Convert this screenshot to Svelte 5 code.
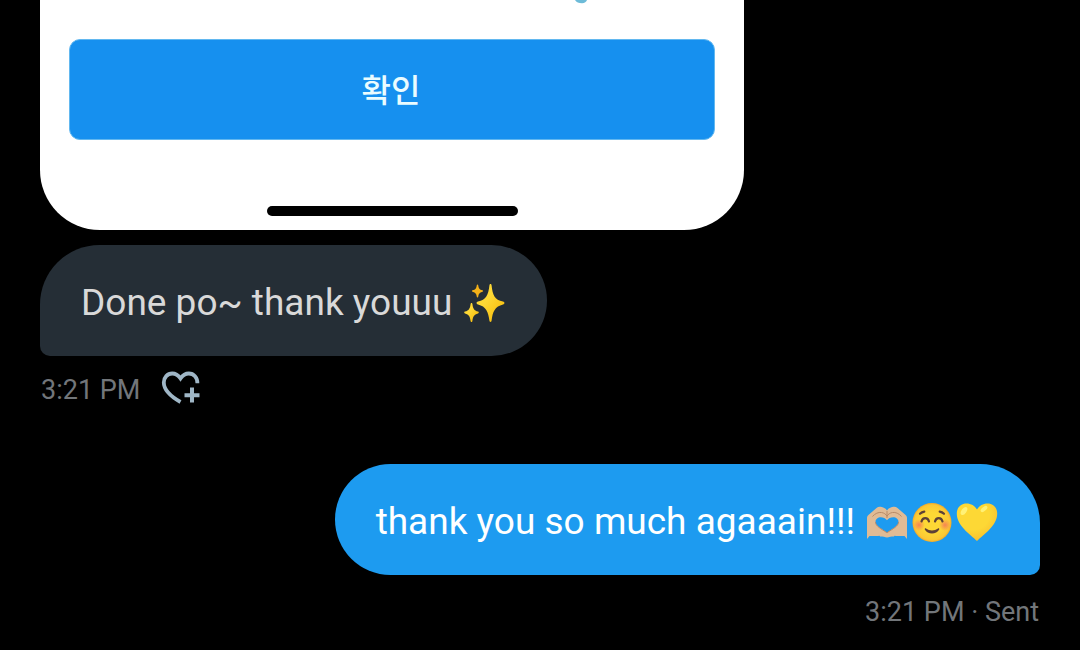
<script>
	let received = $state({ text: 'Done po~ thank youuu', time: '3:21 PM', liked: false });
	let sent = $state({ text: 'thank you so much agaaain!!!', time: '3:21 PM', status: 'Sent' });

	function toggleLike() {
		received.liked = !received.liked;
	}
</script>

<main class="chat">
	<div class="attachment">
		<svg class="droplet" viewBox="0 0 14 4" aria-hidden="true">
			<path d="M1 0h12q-1 3-5 3.200q-5 0-7-3.200z" fill="#6dbbd8" />
		</svg>
		<button type="button" class="confirm">확인</button>
		<div class="home-bar"></div>
	</div>

	<div class="bubble received">
		<span>{received.text}</span>
		<span class="emojis">
			<svg viewBox="0 0 42 42" role="img" aria-label="sparkles">
				<defs>
					<linearGradient id="spark" x1="0" y1="0" x2="1" y2="1">
						<stop offset="0.4" stop-color="#fdd835" />
						<stop offset="1" stop-color="#f4b400" />
					</linearGradient>
				</defs>
				<path
					d="M27.500 2c.8 0 1 .7 1.100 1.400 1 9.500 3 14.200 11.400 16.200.8.200 1.400.6 1.400 1.400s-.6 1.200-1.400 1.400c-8 2-10.400 7-11.400 16.200-.1.800-.4 1.400-1.100 1.400s-1-.6-1.100-1.400c-1-9-3.400-14.200-11.400-16.200-.8-.2-1.400-.6-1.400-1.400s.6-1.200 1.400-1.400c8-2 10.400-6.700 11.400-16.200.1-.7.300-1.400 1.100-1.400z"
					fill="url(#spark)"
				/>
				<path
					d="M8.500 21c.6 0 .8.500.9 1 .5 4.500 1.600 6.500 5.600 7.600.5.100.8.500.8.900s-.3.800-.8.900c-4 1-5.100 3.300-5.600 7.600-.1.500-.3 1-.9 1s-.8-.5-.9-1c-.5-4.300-1.600-6.600-5.600-7.600-.5-.1-.8-.5-.8-.9s.3-.8.800-.9c4-1.100 5.100-3.100 5.600-7.600.1-.5.300-1 .9-1z"
					fill="url(#spark)"
				/>
				<path
					d="M14.500 2.500c.5 0 .6.300.7.700.4 3.200 1.300 4.400 4.200 5.100.5.100.7.400.7.700s-.2.600-.7.700c-2.900.7-3.800 2-4.200 5.100-.1.400-.2.700-.7.700s-.6-.3-.7-.7c-.4-3.100-1.300-4.400-4.200-5.100-.5-.1-.7-.4-.7-.7s.2-.6.700-.7c2.900-.7 3.800-1.900 4.200-5.100.1-.4.200-.7.700-.7z"
					fill="#f4b119"
				/>
			</svg>
		</span>
	</div>
	<div class="meta">
		<span>{received.time}</span>
		<button
			type="button"
			class="like"
			aria-label="Add reaction"
			aria-pressed={received.liked}
			onclick={toggleLike}
		>
			<svg viewBox="0 0 40 36" aria-hidden="true">
				<path
					d="M19.500 32C9 26 2.800 19.500 2.800 12.500c0-5 3.600-9 8.400-9 3.300 0 6 1.700 8.300 5 2.300-3.300 5-5 8.300-5 5 0 8.700 4 8.600 9.700"
					fill="none"
					stroke="currentColor"
					stroke-width="3.800"
				/>
				<path d="M31 17.500v15M23.500 25.200h15" stroke="currentColor" stroke-width="4" />
			</svg>
		</button>
	</div>

	<div class="bubble sent">
		<span>{sent.text}</span>
		<span class="emojis">
			<svg viewBox="0 0 42 42" role="img" aria-label="heart hands">
				<path
					fill-rule="evenodd"
					d="M1 38V17c0-1.500.8-2.500 2-3.500L10.500 7c1.200-1 2.600-1.500 4.200-1.200 3 .5 5 1.700 6.300 3.600 1.300-1.900 3.300-3.100 6.300-3.600 1.600-.3 3 .2 4.200 1.200L39 13.500c1.200 1 2 2 2 3.500v21l-2.500-3h-8c-3.500 0-6.500-.7-9.500-3-3 2.300-6 3-9.500 3h-8zM21 31.500c6.500-4.300 11.500-6.700 11.500-10.700 0-2.800-2.500-4.600-5.300-4.600-2.600 0-4.700 1.200-6.200 3-1.500-1.800-3.600-3-6.200-3-2.800 0-5.300 1.800-5.300 4.600 0 4 5 6.400 11.500 10.700z"
					fill="#e0bb95"
				/>
				<path
					d="M12 30c3 0 6 .5 9 2 3-1.500 6-2 9-2l-2 5.500c-3 0-5 .5-7 1-2-.5-4-1-7-1z"
					fill="#e0bb95"
				/>
				<path
					d="M6.500 15.500c2.500-3 6-4.500 9-4 2.500.4 4.300 1.600 5.500 3.700 1.200-2.100 3-3.300 5.500-3.700 3-.5 6.500 1 9 4M21 10v7M9.500 21c0 4 5 6.500 11.500 10.700 6.500-4.200 11.500-6.700 11.500-10.700"
					fill="none"
					stroke="#b98b68"
					stroke-width="1"
				/>
			</svg>
			<svg viewBox="0 0 42 42" role="img" aria-label="smiling face">
				<defs>
					<radialGradient id="face">
						<stop offset="0.5" stop-color="#fdd835" />
						<stop offset="0.9" stop-color="#fbc834" />
						<stop offset="1" stop-color="#f2a928" />
					</radialGradient>
					<radialGradient id="blush">
						<stop offset="0" stop-color="#f4705c" stop-opacity="0.8" />
						<stop offset="1" stop-color="#f4705c" stop-opacity="0" />
					</radialGradient>
				</defs>
				<circle cx="21" cy="21.500" r="19.500" fill="url(#face)" />
				<circle cx="8" cy="24" r="6" fill="url(#blush)" />
				<circle cx="34" cy="24" r="6" fill="url(#blush)" />
				<path
					d="M10.500 20.500c1-4.500 6.500-4.500 7.500 0M24 20.500c1-4.500 6.500-4.500 7.500 0M9 12.800c1.300-1.300 2.500-1.900 4.300-2.200M33 12.800c-1.300-1.300-2.500-1.900-4.300-2.200"
					fill="none"
					stroke="#5d4037"
					stroke-width="2.200"
					stroke-linecap="round"
				/>
				<path
					d="M15 27.500c-.8-.6-1.600.3-1.200 1.100 2.700 5.300 11.700 5.300 14.400 0 .4-.8-.4-1.700-1.200-1.100-3.500 2.600-8.500 2.600-12 0z"
					fill="#5d4037"
				/>
			</svg>
			<svg viewBox="0 0 42 42" role="img" aria-label="yellow heart">
				<defs>
					<radialGradient id="heart" cx="0.400" cy="0.300" r="0.800">
						<stop offset="0.5" stop-color="#fdd835" />
						<stop offset="1" stop-color="#f7b92e" />
					</radialGradient>
				</defs>
				<path
					d="M21 40C14 33 .8 25 .8 12.500.8 6.500 5 2.500 10.500 2.500c4.500 0 8.300 2.300 10.500 6 2.200-3.700 6-6 10.500-6 5.500 0 9.700 4 9.700 10C41.200 25 28 33 21 40z"
					fill="url(#heart)"
				/>
				<ellipse cx="8" cy="10" rx="2.500" ry="4.500" fill="#fff176" transform="rotate(35 8 10)" />
				<ellipse cx="28" cy="8" rx="2" ry="4" fill="#fff176" transform="rotate(50 28 8)" />
			</svg>
		</span>
	</div>
	<div class="meta outgoing">
		<span>{sent.time} · {sent.status}</span>
	</div>
</main>

<style>
	:global(body) {
		margin: 0;
		background: #000;
	}

	.chat {
		display: flex;
		flex-direction: column;
		align-items: flex-start;
		padding: 0 40px 16px;
		font-family: Roboto, "Noto Sans CJK KR", sans-serif;
	}

	.attachment {
		box-sizing: border-box;
		display: flex;
		flex-direction: column;
		width: 100%;
		max-width: 704px;
		padding: 0 29px 14px;
		margin-bottom: 15px;
		border-radius: 0 0 60px 60px;
		background: #fff;
	}

	.droplet {
		width: 14px;
		height: 4px;
		margin: 0 127px 35px auto;
	}

	.confirm {
		height: 101px;
		padding: 0 2px 4px 0;
		border: 1px solid #62b8f0;
		border-radius: 11px;
		background: #1690ef;
		color: #eafcff;
		font-family: "Noto Sans CJK KR", sans-serif;
		font-size: 32px;
		font-weight: 500;
		cursor: pointer;
	}

	.home-bar {
		align-self: center;
		width: 251px;
		height: 10px;
		margin-top: 66px;
		border-radius: 5px;
		background: #000;
	}

	.bubble {
		box-sizing: border-box;
		display: flex;
		align-items: center;
		gap: 11px;
		min-height: 111px;
		padding: 4px 42px 0 41px;
		font-size: 37px;
		line-height: 48px;
	}

	.received {
		border-radius: 60px 56px 56px 10px;
		background: #252e36;
		color: #d9d9d9;
	}

	.sent {
		align-self: flex-end;
		margin-top: 58px;
		border-radius: 56px 60px 10px 56px;
		background: #1d9bf0;
		color: #fff;
	}

	.emojis {
		display: flex;
		gap: 3px;
	}

	.emojis svg {
		flex: none;
		width: 42px;
		height: 42px;
	}

	.meta {
		display: flex;
		align-items: center;
		gap: 21px;
		height: 36px;
		margin-top: 14px;
		padding: 0 1px;
		color: #72767a;
		font-size: 27px;
		line-height: 36px;
	}

	.meta span {
		padding-top: 3px;
	}

	.outgoing {
		align-self: flex-end;
		margin-top: 17px;
	}

	.like {
		display: flex;
		padding: 0;
		border: none;
		background: none;
		color: #9fb6c6;
		cursor: pointer;
	}

	.like svg {
		width: 40px;
		height: 36px;
	}
</style>
